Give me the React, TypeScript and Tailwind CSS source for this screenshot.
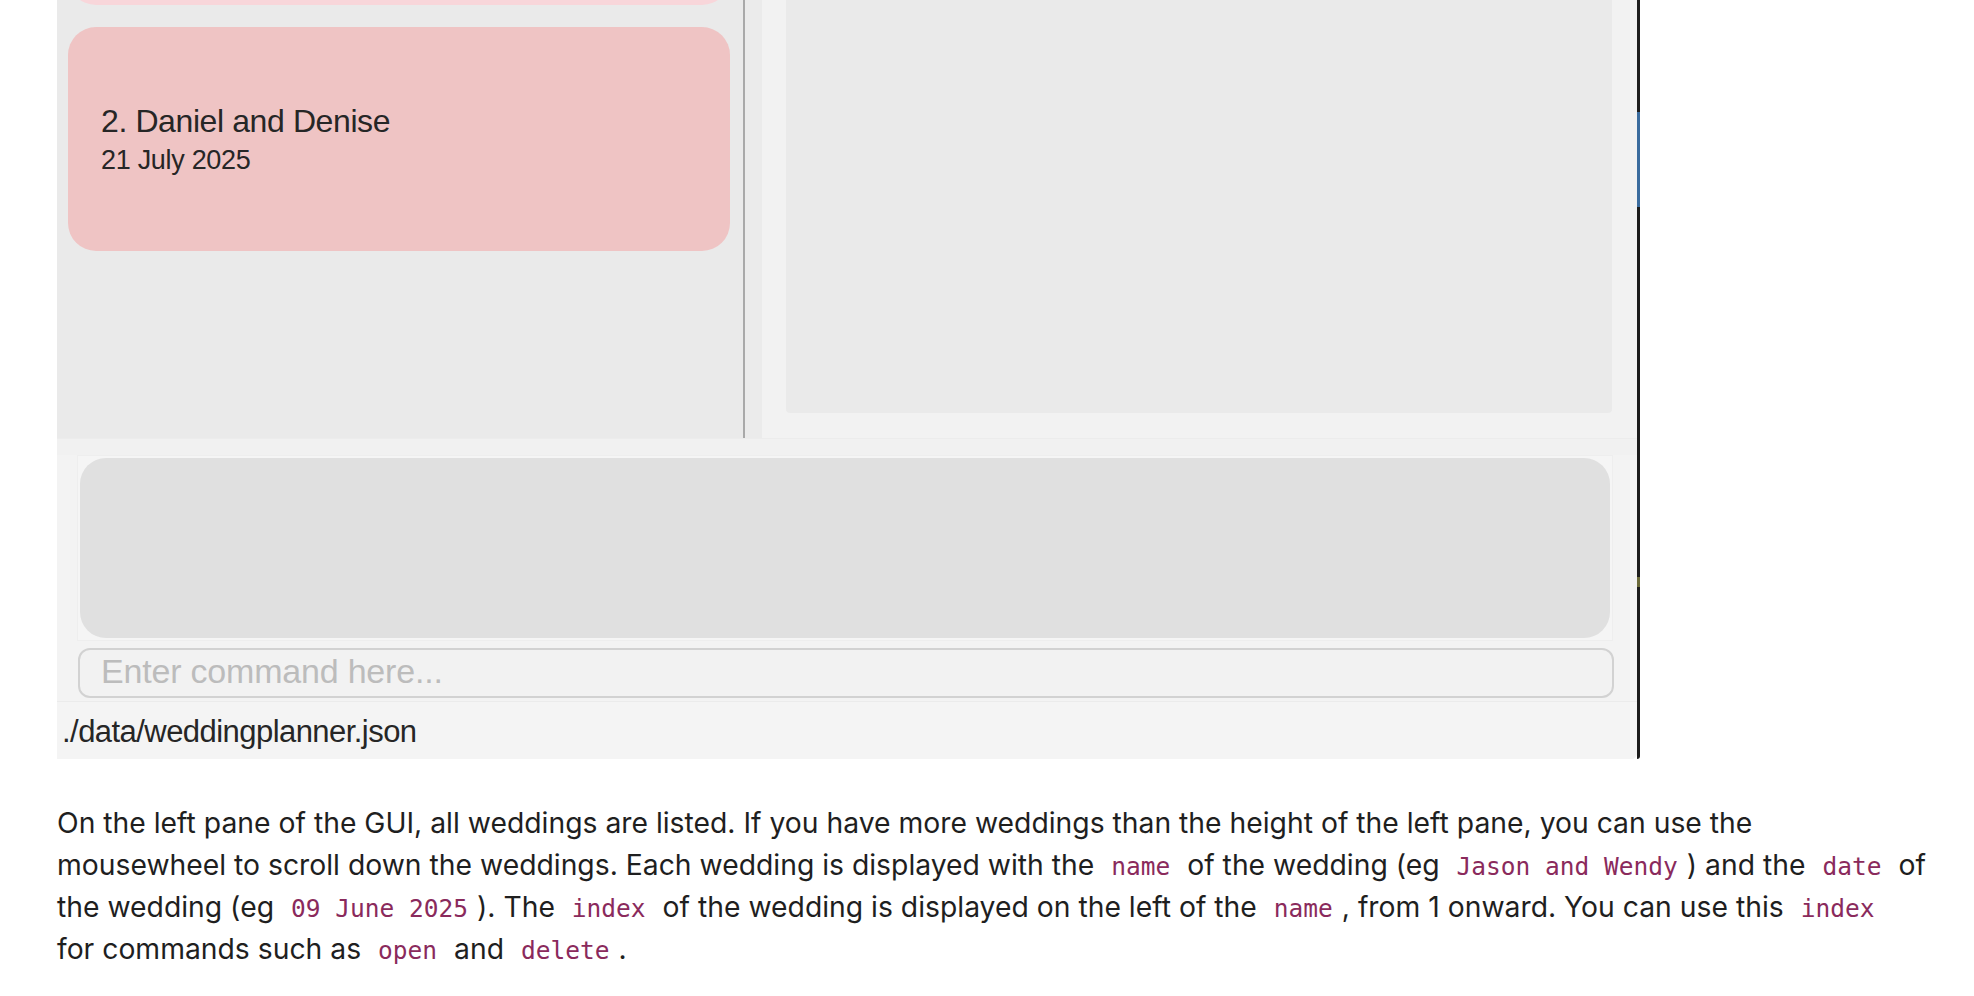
import React from "react";

type Wedding = {
  index: number;
  name: string;
  date: string;
  tone: string;
};

const weddings: Wedding[] = [
  { index: 1, name: "Jason and Wendy", date: "09 June 2025", tone: "bg-[#f8d6da]" },
  { index: 2, name: "Daniel and Denise", date: "21 July 2025", tone: "bg-[#efc4c4]" },
];

// list is scrolled: first card only shows its bottom edge
function WeddingCard({ w, first }: { w: Wedding; first: boolean }) {
  return (
    <div
      className={`${w.tone} ${first ? "-mt-[219px]" : "mt-[22px]"} h-[224px] rounded-[28px] flex flex-col justify-center px-[33px] text-[#262626]`}
    >
      {!first && (
        <>
          <div className="text-[32px] leading-[38px] tracking-[-0.4px]">
            {w.index}. {w.name}
          </div>
          <div className="text-[27px] leading-[32px] mt-[4px] tracking-[-0.3px]">{w.date}</div>
        </>
      )}
    </div>
  );
}

function Code({ children }: { children: React.ReactNode }) {
  return (
    <code className="font-['DejaVu_Sans_Mono',monospace] text-[24.5px] leading-none text-[#8a2a5c] px-[9px]">
      {children}
    </code>
  );
}

export default function App() {
  return (
    <div className="min-h-screen bg-white font-['Liberation_Sans',Arial,sans-serif]">
      {/* app window screenshot */}
      <div className="ml-[57px] w-[1583px] h-[759px] flex">
        <div className="w-[1580px] flex flex-col bg-[#f3f3f3] rounded-br-[6px] overflow-hidden">
          <div className="h-[438px] flex">
            <div className="w-[686px] bg-[#eaeaea] overflow-hidden pl-[11px] pr-[13px]">
              {weddings.map((w, i) => (
                <WeddingCard key={w.index} w={w} first={i === 0} />
              ))}
            </div>
            <div className="w-[2px] bg-[#a9a9a9]" />
            <div className="w-[17px] bg-[#ebebeb]" />
            <div className="flex-1 bg-[#f2f2f2] pl-[24px] pr-[25px] pb-[25px]">
              <div className="h-full bg-[#eaeaea] rounded-b-[4px]" />
            </div>
          </div>
          <div className="h-[17px] bg-[#f1f1f1] border-t border-[#ececec]" />
          <div className="ml-[20px] mr-[24px] p-[2px] bg-[#f5f5f5] border border-[#eeeeee]">
            <div className="h-[180px] bg-[#e0e0e0] rounded-[26px]" />
          </div>
          <div className="mt-[7px] ml-[21px] mr-[23px] h-[50px] border-2 border-[#d2d2d2] rounded-[12px] bg-[#f2f2f2] flex items-center pl-[21px]">
            <span className="text-[34px] text-[#bcbcbc] tracking-[-0.2px] -mt-[3px]">Enter command here...</span>
          </div>
          <div className="mt-[3px] flex-1 bg-[#f4f4f4] border-t border-[#ebebeb] pl-[5px] pt-[12px]">
            <span className="text-[31px] leading-[36px] text-[#262626] tracking-[-0.55px]">./data/weddingplanner.json</span>
          </div>
        </div>
        <div className="w-[3px] flex flex-col rounded-br-[10px] overflow-hidden">
          <div className="h-[112px] bg-[#1e1e1e]" />
          <div className="h-[95px] bg-[#3b6c9e]" />
          <div className="h-[370px] bg-[#1c1c1c]" />
          <div className="h-[10px] bg-[#6b6a3a]" />
          <div className="flex-1 bg-[#1c1c1c]" />
        </div>
      </div>

      {/* description */}
      <p className="mt-[43px] ml-[57px] text-[28.3px] leading-[42px] text-[#1f1f1f] font-['Inter',sans-serif] whitespace-nowrap">
        On the left pane of the GUI, all weddings are listed. If you have more weddings than the height of the left pane, you can use the
        <br />
        mousewheel to scroll down the weddings. Each wedding is displayed with the <Code>name</Code> of the wedding (eg <Code>Jason and Wendy</Code>) and the <Code>date</Code> of
        <br />
        the wedding (eg <Code>09 June 2025</Code>). The <Code>index</Code> of the wedding is displayed on the left of the <Code>name</Code>, from 1 onward. You can use this <Code>index</Code>
        <br />
        for commands such as <Code>open</Code> and <Code>delete</Code>.
      </p>
    </div>
  );
}
